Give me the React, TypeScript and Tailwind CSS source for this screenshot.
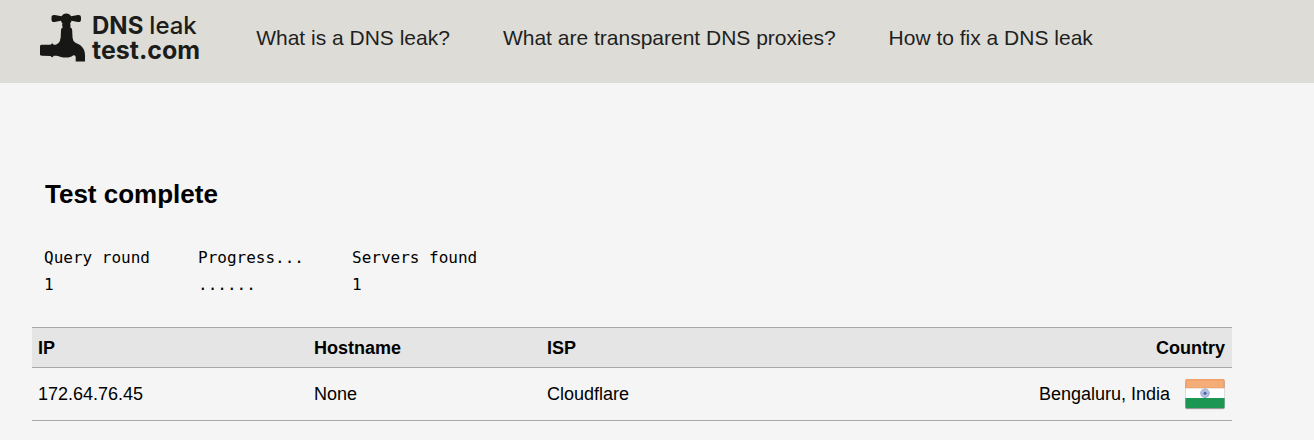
interface QueryRound {
  round: number;
  progress: string;
  found: number;
}

interface Server {
  ip: string;
  hostname: string;
  isp: string;
  country: string;
}

const links = [
  { href: '#what-is-a-dns-leak', label: 'What is a DNS leak?' },
  { href: '#transparent-proxies', label: 'What are transparent DNS proxies?' },
  { href: '#how-to-fix', label: 'How to fix a DNS leak' },
];

const rounds: QueryRound[] = [{ round: 1, progress: '......', found: 1 }];

const servers: Server[] = [
  { ip: '172.64.76.45', hostname: 'None', isp: 'Cloudflare', country: 'Bengaluru, India' },
];

function TapIcon() {
  return (
    <svg width="46" height="50" viewBox="0 0 46 50" fill="#171715" aria-hidden="true">
      {/* handle */}
      <path d="M11.500 4.500c0-2 1.300-2.700 3.200-2.400l6.800 1.200C22.500 1.500 24 .400 26.300.400s3.900 1.100 4.900 2.900l6.600-1.200c2-.3 3.200.5 3.200 2.400v2c0 2-1.200 2.800-3.200 2.500l-6.300-1.200c-.3 1.300-.6 1.900-1.300 2.500l.2 2.700h-8.200l.2-2.700c-.7-.6-1.100-1.200-1.400-2.500L14.700 9c-1.900.3-3.200-.5-3.200-2.500z" />
      {/* stem */}
      <path d="M22.500 11.500h7.600l.4 3c1.200.7 1.700 1.500 1.700 3.200l.5 10H20.500l.5-10c0-1.700.5-2.500 1.600-3.200z" />
      {/* body and spout */}
      <path d="M20.500 25.500h12.200c.3 2.500 1.700 3.900 4.800 5.200 4.700 2 7.500 6 7.500 11V48.500h-9.300V44.600c0-1.700-1-2.600-2.700-2.200-1.800 1.500-4 2.100-6.700 2.100-4.300 0-6.800-1-9.800-1.800h-2.700l-1.600 1.700-1.700-1.500L2 42.700C.5 42.700-.2 42-.2 40.500V34c0-1.500.7-2.300 2.200-2.300h8.500l1.700-1.500 1.600 1.500h2c2.500-.8 4.400-2.800 4.700-6.200z" />
    </svg>
  );
}

function IndiaFlag() {
  return (
    <svg width="40" height="32" viewBox="0 0 40 32" role="img" aria-label="Flag of India">
      <rect x="0" y="2" width="40" height="29.500" rx="2" fill="#000" opacity=".12" />
      <rect x=".5" y="1.500" width="39" height="29.500" rx="1.500" fill="#999" />
      <path d="M1.500 1h37q1 0 1 1v8.500H.5V2q0-1 1-1z" fill="#f0a068" />
      <path d="M2 2.500h36v7H2z" fill="#f6b27e" opacity=".7" />
      <path d="M.5 10.200h39V20H.5z" fill="#fff" />
      <path d="M.5 20h39v9q0 1-1 1h-37q-1 0-1-1z" fill="#1b9653" />
      <circle cx="20" cy="15.200" r="4.300" fill="#c3cbe5" stroke="#a0add5" />
      <path
        d="M20 11v8.400M15.800 15.200h8.400M17 12.200l6 6M23 12.200l-6 6"
        stroke="#8c9ccd"
        strokeWidth=".6"
      />
      <circle cx="20" cy="15.200" r="1.500" fill="#4c62ab" />
    </svg>
  );
}

export default function App() {
  return (
    <div className="min-h-screen bg-[#f5f5f5] font-['Liberation_Sans',Arial,sans-serif] text-black">
      <header className="flex items-start bg-[#dddcd7] px-10 pt-[13px] pb-5 text-[#1f1f1f]">
        <a
          href="#home"
          className="flex gap-1.5 font-[Inter,sans-serif] text-[25px] leading-[25px] font-bold text-[#1c1c1a]"
        >
          <TapIcon />
          <div>
            <div className="flex gap-1.5 text-[24px] leading-[25px]">
              <div>DNS</div>
              <div className="font-medium">leak</div>
            </div>
            <div>test.com</div>
          </div>
        </a>
        <nav className="ml-14 flex gap-[53px] pt-[11px] text-[21px] leading-7">
          {links.map((link) => (
            <a key={link.href} href={link.href}>
              {link.label}
            </a>
          ))}
        </nav>
      </header>

      <main className="px-8 pt-[95px]">
        <h1 className="px-[13px] text-[26px] leading-8 font-bold">Test complete</h1>

        <table className="mx-3 mt-[34px] text-left font-['DejaVu_Sans_Mono',monospace] text-[16px] leading-[27px]">
          <thead>
            <tr>
              <th className="w-[154px] font-normal">Query round</th>
              <th className="w-[154px] font-normal">Progress...</th>
              <th className="font-normal">Servers found</th>
            </tr>
          </thead>
          <tbody>
            {rounds.map((row) => (
              <tr key={row.round}>
                <td>{row.round}</td>
                <td>{row.progress}</td>
                <td>{row.found}</td>
              </tr>
            ))}
          </tbody>
        </table>

        <table className="mt-[29px] w-full max-w-[1200px] border-collapse text-left text-[18px] leading-5">
          <thead>
            <tr className="h-10 border-y border-[#a8a8a8] bg-[#e5e5e5]">
              <th className="w-[23%] px-1.5">IP</th>
              <th className="w-[233px] px-1.5">Hostname</th>
              <th className="px-1.5">ISP</th>
              <th className="px-[7px] text-right">Country</th>
            </tr>
          </thead>
          <tbody>
            {servers.map((server) => (
              <tr key={server.ip} className="h-[53px] border-b border-[#a8a8a8]">
                <td className="px-1.5">{server.ip}</td>
                <td className="px-1.5">{server.hostname}</td>
                <td className="px-1.5">{server.isp}</td>
                <td className="px-[7px]">
                  <div className="flex items-center justify-end gap-[15px]">
                    {server.country}
                    <IndiaFlag />
                  </div>
                </td>
              </tr>
            ))}
          </tbody>
        </table>
      </main>
    </div>
  );
}
